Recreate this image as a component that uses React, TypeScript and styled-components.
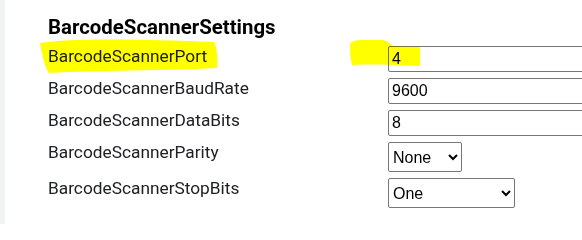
import React from "react";
import styled, { createGlobalStyle } from "styled-components";

const GlobalStyle = createGlobalStyle`
  html, body {
    margin: 0;
    padding: 0;
    background: #ffffff;
    overflow: hidden;
  }
  body {
    font-family: Roboto, "Liberation Sans", Arial, sans-serif;
  }
`;

const Page = styled.div`
  position: relative;
  display: flex;
  width: 582px;
  height: 224px;
  overflow: hidden;
`;

const SideStrip = styled.div`
  width: 5px;
  flex: none;
  background: #f1f3f3;
`;

const Content = styled.div`
  flex: 1;
  padding: 16px 0 0 43px;
`;

const Title = styled.div`
  font-family: Roboto, sans-serif;
  font-weight: 700;
  font-size: 20.4px;
  line-height: 23px;
  color: #000000;
  margin-bottom: 7px;
`;

const Grid = styled.div`
  display: grid;
  grid-template-columns: 340px 300px;
  row-gap: 6px;
  align-items: start;
`;

const Label = styled.div`
  font-family: Roboto, sans-serif;
  font-size: 17.3px;
  line-height: 21px;
  color: #202124;
  white-space: nowrap;
`;

const TextInput = styled.input`
  box-sizing: border-box;
  width: 300px;
  height: 26px;
  margin: 0;
  padding: 0 3px;
  border: 1px solid #767676;
  border-radius: 2px;
  font-family: "Liberation Sans", Arial, sans-serif;
  font-size: 16px;
  color: #000000;
  background: #ffffff;
  outline: none;
`;

const Select = styled.select<{ $w: number }>`
  box-sizing: border-box;
  width: ${(p) => p.$w}px;
  height: 30px;
  margin: 0;
  border: 1px solid #767676;
  border-radius: 2px;
  font-family: "Liberation Sans", Arial, sans-serif;
  font-size: 16px;
  color: #000000;
  background: #ffffff;
`;

const Highlight = styled.svg`
  position: absolute;
  left: 0;
  top: 0;
  width: 582px;
  height: 224px;
  pointer-events: none;
  mix-blend-mode: multiply;
`;

export default function App() {
  return (
    <>
      <GlobalStyle />
      <Page>
        <SideStrip />
        <Content>
          <Title>BarcodeScannerSettings</Title>
          <Grid>
            <Label>BarcodeScannerPort</Label>
            <TextInput defaultValue="4" />
            <Label>BarcodeScannerBaudRate</Label>
            <TextInput defaultValue="9600" />
            <Label>BarcodeScannerDataBits</Label>
            <TextInput defaultValue="8" />
            <Label>BarcodeScannerParity</Label>
            <div>
              <Select $w={74} defaultValue="None">
                <option>None</option>
                <option>Odd</option>
                <option>Even</option>
                <option>Mark</option>
                <option>Space</option>
              </Select>
            </div>
            <Label>BarcodeScannerStopBits</Label>
            <div>
              <Select $w={127} defaultValue="One">
                <option>None</option>
                <option>One</option>
                <option>Two</option>
                <option>OnePointFive</option>
              </Select>
            </div>
          </Grid>
        </Content>
        <Highlight viewBox="0 0 582 224">
          <path
            d="M40,43 C70,38 140,39 214,42 C217,46 218,60 217,68 C160,71 100,70 49,73 C45,68 42,55 40,43 Z"
            fill="#ffff00"
          />
          <path
            d="M350,44 C352,40 358,40 366,40 L383,40 C388,41 390,44 393,46 L420,47 L420,66 C400,65 370,64 352,65 C350,58 350,50 350,44 Z"
            fill="#ffff00"
          />
        </Highlight>
      </Page>
    </>
  );
}
